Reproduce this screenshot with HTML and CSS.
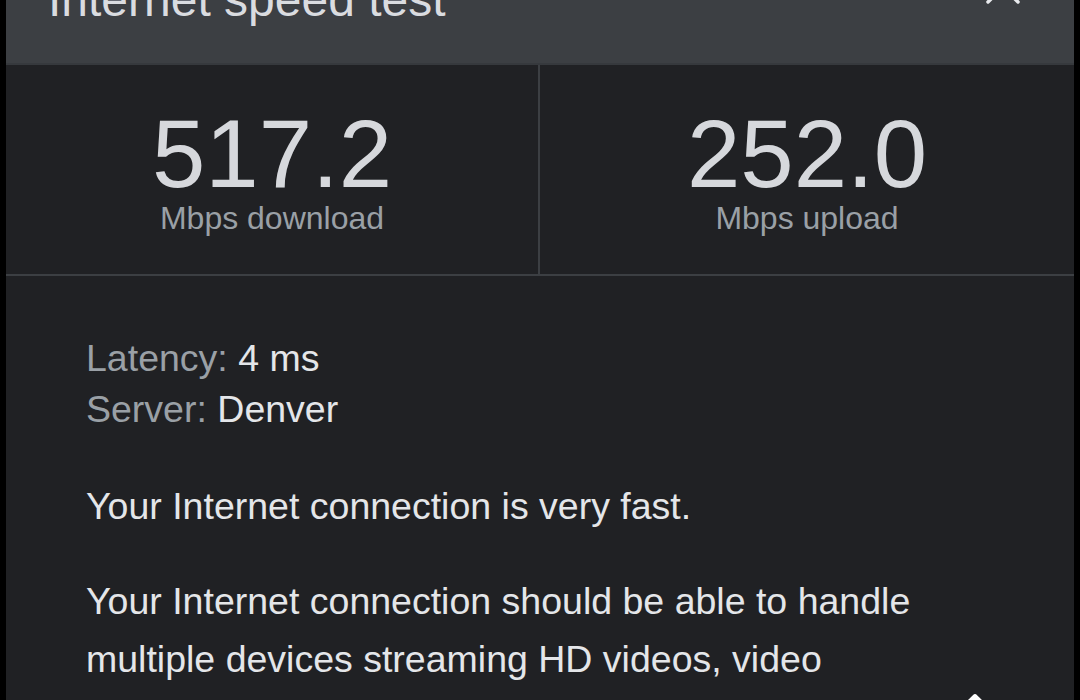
FILE: index.html
```html
<!DOCTYPE html>
<html lang="en">
<head>
    <meta charset="UTF-8">
    <meta name="viewport" content="width=device-width, initial-scale=1.0">
    <title>Internet speed test</title>
    <link rel="stylesheet" href="styles.css">
</head>
<body>

<div class="card">
    <div class="header">
      <h1 class="title">Internet speed test</h1>
      <svg class="close" width="34" height="34" viewBox="0 0 34 34" fill="none" xmlns="http://www.w3.org/2000/svg">
        <path d="M2 2L32 32M32 2L2 32" stroke="#e8eaed" stroke-width="3.5" stroke-linecap="round"/>
      </svg>
    </div>

    <div class="stats">
      <div class="stat">
        <div class="statValue">517.2</div>
        <div class="statLabel">Mbps download</div>
      </div>
      <div class="stat">
        <div class="statValue">252.0</div>
        <div class="statLabel">Mbps upload</div>
      </div>
    </div>

    <div class="details">
      <div class="meta">
        <div class="metaRow"><span class="metaKey">Latency:</span> 4 ms</div>
        <div class="metaRow"><span class="metaKey">Server:</span> Denver</div>
      </div>
      <p class="summary">Your Internet connection is very fast.</p>
      <p class="summary">Your Internet connection should be able to handle multiple devices streaming HD videos, video conferencing and gaming at the same time.</p>
    </div>

    <div class="fab"></div>
</div>

</body>
</html>
```

FILE: styles.css
```css
body, html {
  margin: 0;
  padding: 0;
  width: 100vw;
  height: 100vh;
  overflow: hidden;
  background-color: #000;
  font-family: 'Liberation Sans', Arial, sans-serif;
}

.card {
  position: relative;
  margin: 0 6px;
  height: 100%;
  background-color: #202124;
  overflow: hidden;
}

.header {
  position: relative;
  height: 63px;
  padding-left: 42px;
  background-color: #3c3f43;
  border-bottom: 2px solid #36393d;
  overflow: hidden;
}

.title {
  margin: -24px 0 0;
  font-size: 48px;
  line-height: 48px;
  font-weight: 400;
  color: #dadce0;
}

.close {
  position: absolute;
  top: -30px;
  right: 54px;
}

.stats {
  display: grid;
  grid-template-columns: 1fr 1fr;
  border-bottom: 2px solid #3c3f43;
}

.stat {
  display: flex;
  flex-direction: column;
  align-items: center;
  padding: 43px 0 38px;
}

.stat:first-child {
  border-right: 2px solid #3c3f43;
}

.statValue {
  font-size: 96px;
  line-height: 92px;
  color: #d6d8dc;
}

.statLabel {
  font-size: 32px;
  line-height: 36px;
  color: #9aa0a6;
}

.details {
  padding: 57px 80px 0 80px;
  font-size: 37.5px;
  color: #e4e6e9;
}

.meta {
  line-height: 51px;
}

.metaKey {
  color: #9aa0a6;
}

.summary {
  margin: 42px 0 0;
  line-height: 58px;
}

.summary + .summary {
  margin-top: 37px;
}

/* little white button peeking in at the bottom edge */
.fab {
  position: absolute;
  left: 957px;
  top: 691px;
  width: 24px;
  height: 24px;
  background-color: #fff;
  border-radius: 3px;
  transform: translate(0, 7px) rotate(45deg);
  transform-origin: 12px 12px;
}
```
